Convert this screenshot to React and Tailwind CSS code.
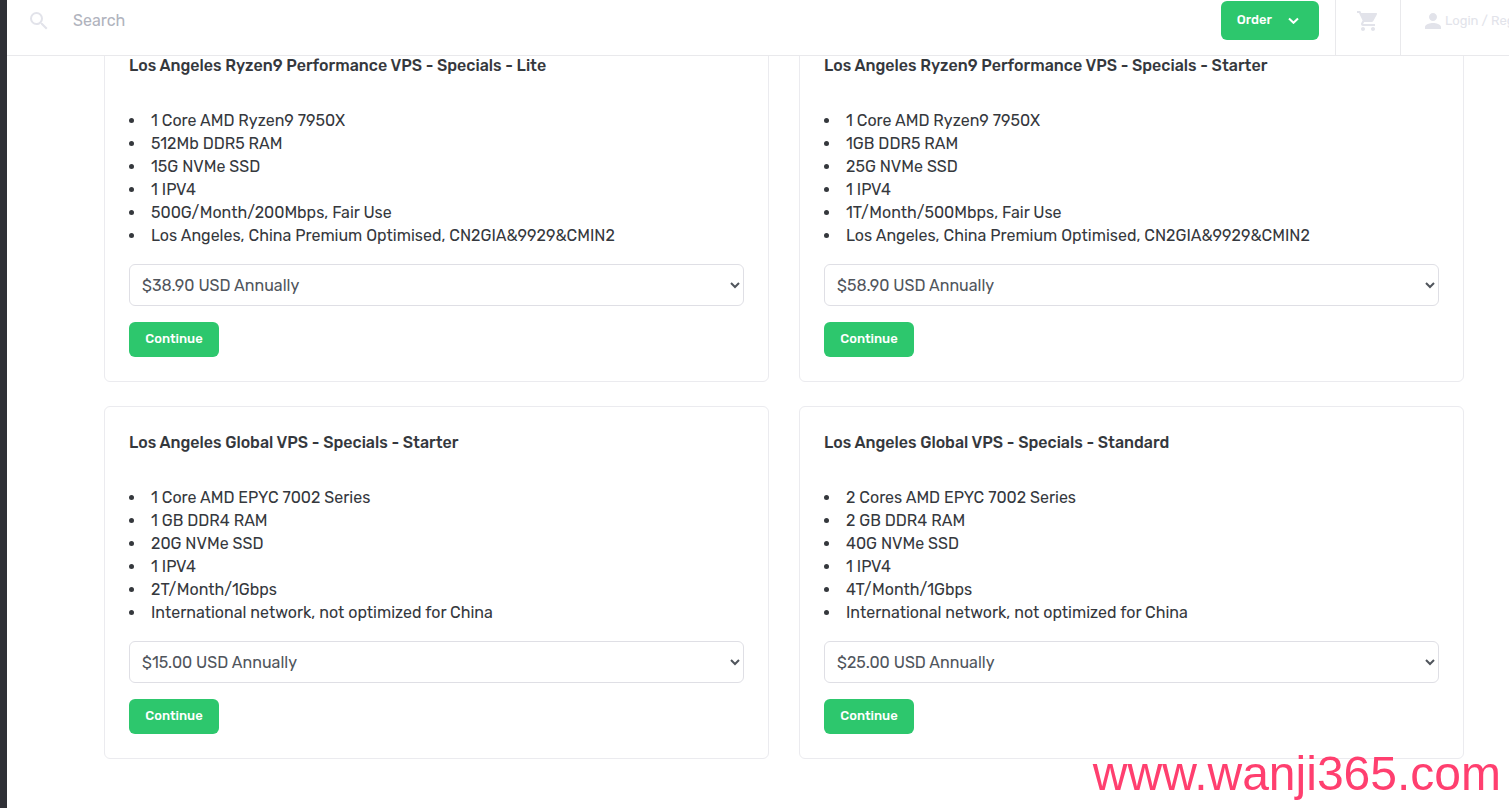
import { useState } from 'react';
import { MdPerson, MdSearch, MdShoppingCart } from 'react-icons/md';

const plans = [
  {
    id: 'ryzen-lite',
    name: 'Los Angeles Ryzen9 Performance VPS - Specials - Lite',
    features: [
      '1 Core AMD Ryzen9 7950X',
      '512Mb DDR5 RAM',
      '15G NVMe SSD',
      '1 IPV4',
      '500G/Month/200Mbps, Fair Use',
      'Los Angeles, China Premium Optimised, CN2GIA&9929&CMIN2',
    ],
    price: '$38.90 USD Annually',
  },
  {
    id: 'ryzen-starter',
    name: 'Los Angeles Ryzen9 Performance VPS - Specials - Starter',
    features: [
      '1 Core AMD Ryzen9 7950X',
      '1GB DDR5 RAM',
      '25G NVMe SSD',
      '1 IPV4',
      '1T/Month/500Mbps, Fair Use',
      'Los Angeles, China Premium Optimised, CN2GIA&9929&CMIN2',
    ],
    price: '$58.90 USD Annually',
  },
  {
    id: 'global-starter',
    name: 'Los Angeles Global VPS - Specials - Starter',
    features: [
      '1 Core AMD EPYC 7002 Series',
      '1 GB DDR4 RAM',
      '20G NVMe SSD',
      '1 IPV4',
      '2T/Month/1Gbps',
      'International network, not optimized for China',
    ],
    price: '$15.00 USD Annually',
  },
  {
    id: 'global-standard',
    name: 'Los Angeles Global VPS - Specials - Standard',
    features: [
      '2 Cores AMD EPYC 7002 Series',
      '2 GB DDR4 RAM',
      '40G NVMe SSD',
      '1 IPV4',
      '4T/Month/1Gbps',
      'International network, not optimized for China',
    ],
    price: '$25.00 USD Annually',
  },
];

function Header() {
  const [query, setQuery] = useState('');

  return (
    <header className="sticky top-0 z-10 flex h-14 border-b border-[#e9e9ec] bg-white">
      <div className="flex min-w-0 flex-1 items-center pb-3.5 pl-5">
        <MdSearch className="size-6 shrink-0 text-[#e2e3ea]" />
        <input
          type="text"
          aria-label="Search"
          placeholder="Search"
          value={query}
          onChange={(e) => setQuery(e.target.value)}
          className="ml-5.5 min-w-0 flex-1 bg-transparent text-base text-[#35383d] outline-none placeholder:text-[#b0b3bd]"
        />
      </div>
      <div className="flex items-center border-r border-[#e9e9ec] pr-4 pb-3.5">
        <button
          type="button"
          className="flex h-[39px] items-center gap-4 rounded-md bg-[#2dc76d] pr-5 pb-0.5 pl-4 text-[13px] font-medium text-white"
        >
          Order
          <svg viewBox="0 0 11 8" className="h-2 w-[11px]" fill="none" stroke="currentColor" strokeWidth="2">
            <path d="M1 2.5 5.5 6.8 10 2.5" />
          </svg>
        </button>
      </div>
      <a
        href="#cart"
        aria-label="Cart"
        className="flex items-center border-r border-[#e9e9ec] px-5 pb-3.5 text-[#e2e3ea]"
      >
        <MdShoppingCart className="size-6" />
      </a>
      <a
        href="#login"
        className="flex w-27 shrink-0 items-center overflow-hidden pb-3.5 pl-5 text-[13px] whitespace-nowrap text-[#e2e3ea]"
      >
        <MdPerson className="size-6 shrink-0" />
        Login / Register
      </a>
    </header>
  );
}

function PlanCard({ plan }) {
  return (
    <section className="rounded-md border border-[#ebebef] p-6">
      <h2 className="mb-8 text-base leading-[23px] font-medium">{plan.name}</h2>
      <ul className="mb-[17px] list-inside list-disc leading-[23px]">
        {plan.features.map((feature) => (
          <li key={feature}>{feature}</li>
        ))}
      </ul>
      <form onSubmit={(e) => e.preventDefault()}>
        <select
          aria-label={`Billing cycle for ${plan.name}`}
          className="mb-4 block h-[42px] w-full rounded-md border border-[#dfdfe5] bg-white pl-2 text-base text-[#50555c]"
        >
          <option>{plan.price}</option>
        </select>
        <button
          type="submit"
          className="block h-[35px] min-w-[90px] rounded-md bg-[#2dc76d] px-[15px] pb-0.5 text-[13px] font-medium text-white"
        >
          Continue
        </button>
      </form>
    </section>
  );
}

export default function App() {
  return (
    <div className="flex min-h-screen bg-white font-[Rubik,Roboto,sans-serif] text-[#35383d]">
      <aside className="w-[7px] shrink-0 bg-[#2f3036]" />
      <div className="min-w-0 flex-1">
        <Header />
        {/* the first row of cards runs up under the sticky header */}
        <main className="-mt-[27px] grid grid-cols-2 gap-x-[30px] gap-y-6 pr-[45px] pb-12 pl-[97px]">
          {plans.map((plan) => (
            <PlanCard key={plan.id} plan={plan} />
          ))}
        </main>
      </div>
      <div className="pointer-events-none fixed right-2 bottom-2.5 z-20 font-['Liberation_Sans',Arial,sans-serif] text-5xl leading-none text-[#ff3f6f]">
        www.wanji365.com
      </div>
    </div>
  );
}
